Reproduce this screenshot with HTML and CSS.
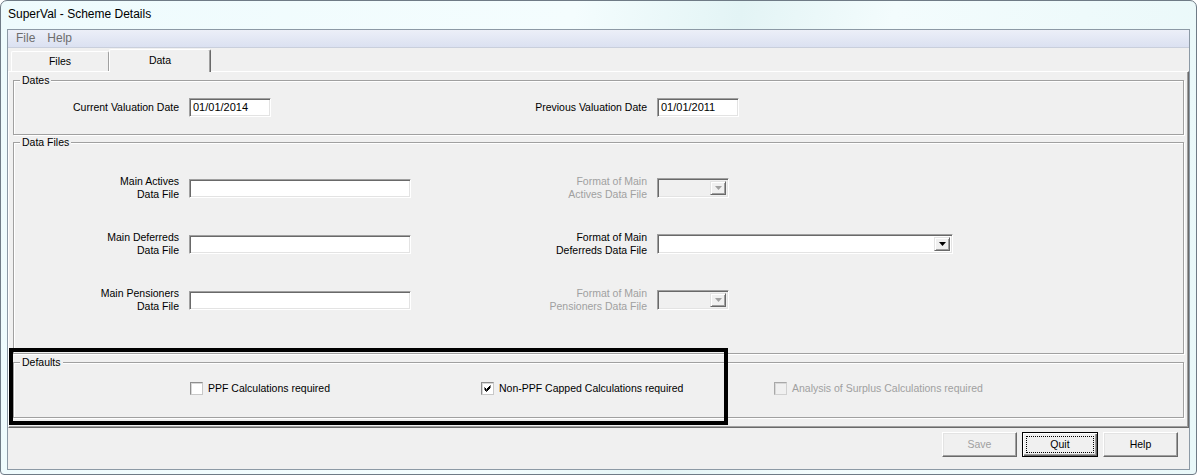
FILE: index.html
```html
<!DOCTYPE html>
<html>
<head>
<meta charset="utf-8">
<title>SuperVal - Scheme Details</title>
<link rel="stylesheet" href="styles.css">
</head>
<body>
<div class="window">
  <div class="titlebar">SuperVal - Scheme Details</div>
  <div class="client">
    <div class="menubar"><span class="menu">File</span><span class="menu">Help</span></div>
    <div class="tabstrip">
      <div class="tab">Files</div>
      <div class="tab active">Data</div>
    </div>
    <div class="panel">
      <div class="group g-dates">
        <div class="gtitle">Dates</div>
        <div class="row date-row">
          <div class="lbl lbl-left">Current Valuation Date</div>
          <div class="text w-date">01/01/2014</div>
          <div class="lbl lbl-right-date">Previous Valuation Date</div>
          <div class="text w-date">01/01/2011</div>
        </div>
      </div>
      <div class="group g-files">
        <div class="gtitle">Data Files</div>
        <div class="file-rows">
          <div class="row file-row">
            <div class="lbl lbl-left">Main Actives<br>Data File</div>
            <div class="text w-file"></div>
            <div class="lbl lbl-right disabled">Format of Main<br>Actives Data File</div>
            <div class="combo combo-small is-disabled"><span class="drop"><svg width="7" height="4" viewBox="0 0 7 4"><polygon points="0,0 7,0 3.5,4" fill="#a0a0a0"/></svg></span></div>
          </div>
          <div class="row file-row">
            <div class="lbl lbl-left">Main Deferreds<br>Data File</div>
            <div class="text w-file"></div>
            <div class="lbl lbl-right">Format of Main<br>Deferreds Data File</div>
            <div class="combo combo-wide"><span class="drop"><svg width="7" height="4" viewBox="0 0 7 4"><polygon points="0,0 7,0 3.5,4" fill="#000"/></svg></span></div>
          </div>
          <div class="row file-row">
            <div class="lbl lbl-left">Main Pensioners<br>Data File</div>
            <div class="text w-file"></div>
            <div class="lbl lbl-right disabled">Format of Main<br>Pensioners Data File</div>
            <div class="combo combo-small is-disabled"><span class="drop"><svg width="7" height="4" viewBox="0 0 7 4"><polygon points="0,0 7,0 3.5,4" fill="#a0a0a0"/></svg></span></div>
          </div>
        </div>
      </div>
      <div class="group g-defaults">
        <div class="gtitle">Defaults</div>
        <div class="row chk-row">
          <div class="chk chk-1"><span class="box"></span><span class="chk-label">PPF Calculations required</span></div>
          <div class="chk chk-2"><span class="box"><svg width="7" height="7" viewBox="0 0 7 7"><path d="M0.5 2.5 L2.5 4.5 L6.5 0.5 M0.5 3.5 L2.5 5.5 L6.5 1.5 M0.5 4.5 L2.5 6.5 L6.5 2.5" stroke="#000" stroke-width="1" fill="none"/></svg></span><span class="chk-label">Non-PPF Capped Calculations required</span></div>
          <div class="chk chk-3 disabled"><span class="box"></span><span class="chk-label">Analysis of Surplus Calculations required</span></div>
        </div>
      </div>
    </div>
    <div class="buttons">
      <div class="btn btn-save disabled">Save</div>
      <div class="btn btn-quit"><span class="btn-focus">Quit</span></div>
      <div class="btn btn-help">Help</div>
    </div>
  </div>
  <div class="annotation"></div>
</div>
</body>
</html>
```

FILE: styles.css
```css
* { box-sizing: border-box; }

body {
  margin: 0;
  width: 1197px;
  height: 475px;
  overflow: hidden;
  background: #ffffff;
  font-family: "Liberation Sans", Arial, sans-serif;
  color: #000;
}

.window {
  position: relative;
  width: 1197px;
  height: 475px;
  border: 1px solid #6f7b86;
  border-radius: 7px 7px 4px 4px;
  background: linear-gradient(100deg, #eefbfd 0%, #f4fdfe 45%, #e3f4f5 58%, #f3fcfd 70%, #e9f8f9 100%);
}

.titlebar {
  height: 28px;
  padding-left: 7px;
  font-size: 12px;
  line-height: 26px;
}

.client {
  margin: 0 6px;
  height: 441px;
  border: 1px solid #8c99a5;
  background: #f0f0f0;
  display: flex;
  flex-direction: column;
}

.menubar {
  height: 18px;
  border-bottom: 1px solid #c9cfdc;
  background: linear-gradient(#eceff8, #dbe1f1);
  padding-left: 2px;
  font-size: 12px;
  line-height: 17px;
  color: #6d6d6d;
  display: flex;
}

.menu { padding: 0 6px; }

.tabstrip {
  height: 23px;
  display: flex;
  align-items: flex-end;
  padding-left: 3px;
}

.tab {
  width: 98px;
  height: 20px;
  background: #f0f0f0;
  border-top: 1px solid #fff;
  border-left: 1px solid #fff;
  border-right: 1px solid #a0a0a0;
  border-radius: 2px 2px 0 0;
  font-size: 10.5px;
  line-height: 19px;
  text-align: center;
}

.tab.active {
  width: 102px;
  height: 23px;
  margin-bottom: -1px;
  position: relative;
  z-index: 1;
  border-right: 1px solid #696969;
  box-shadow: inset -1px 0 0 #a0a0a0;
  line-height: 20px;
}

.panel {
  height: 357px;
  border-top: 1px solid #fff;
  border-left: 1px solid #fff;
  border-right: 1px solid #696969;
  border-bottom: 1px solid #696969;
  box-shadow: inset -1px -1px 0 #a0a0a0;
  padding: 8px 4px 0 4px;
}

.group {
  border: 1px solid #a0a0a0;
  box-shadow: inset 1px 1px 0 #fff, 1px 1px 0 #fff;
}

.g-dates { height: 55px; }
.g-files { height: 212px; margin-top: 7px; }
.g-defaults { height: 56px; margin-top: 8px; }

.gtitle {
  width: max-content;
  margin: -7px 0 0 6px;
  padding: 0 2px;
  background: #f0f0f0;
  font-size: 10.5px;
  line-height: 13px;
}

.row {
  display: flex;
  align-items: center;
}

.date-row { margin-top: 11px; height: 19px; }

.lbl {
  font-size: 10.5px;
  line-height: 13px;
  text-align: right;
  flex: none;
}

.lbl-left { width: 165px; margin-right: 10px; }
.lbl-right-date { width: 376px; margin-right: 10px; }
.lbl-right { width: 236px; margin-right: 10px; }

.disabled { color: #a0a0a0; }

.text {
  height: 19px;
  flex: none;
  background: #fff;
  border: 1px solid;
  border-color: #a0a0a0 #fff #fff #a0a0a0;
  box-shadow: inset 1px 1px 0 #696969, inset -1px -1px 0 #e3e3e3;
  font-size: 11px;
  line-height: 17px;
  padding-left: 3px;
}

.w-date { width: 82px; }
.w-file { width: 222px; }

.file-rows {
  margin-top: 29px;
  display: flex;
  flex-direction: column;
  gap: 36px;
}

.file-row { height: 20px; }

.combo {
  height: 20px;
  flex: none;
  background: #fff;
  border: 1px solid;
  border-color: #a0a0a0 #fff #fff #a0a0a0;
  box-shadow: inset 1px 1px 0 #696969, inset -1px -1px 0 #e3e3e3;
  display: flex;
  justify-content: flex-end;
  padding: 2px;
}

.combo.is-disabled { background: #f0f0f0; }
.combo-small { width: 72px; }
.combo-wide { width: 296px; }

.drop {
  width: 16px;
  height: 100%;
  background: #f0f0f0;
  border: 1px solid;
  border-color: #e3e3e3 #696969 #696969 #e3e3e3;
  box-shadow: inset 1px 1px 0 #fff, inset -1px -1px 0 #a0a0a0;
  display: flex;
  align-items: center;
  justify-content: center;
}

.drop svg { display: block; }

.chk-row { margin-top: 13px; height: 13px; }

.chk {
  display: flex;
  align-items: center;
  flex: none;
  font-size: 10.5px;
  line-height: 13px;
}

.chk-1 { margin-left: 176px; width: 291px; }
.chk-2 { width: 293px; }

.box {
  width: 13px;
  height: 13px;
  flex: none;
  background: #fff;
  border: 1px solid;
  border-color: #8e8e8e #c8c8c8 #c8c8c8 #8e8e8e;
  box-shadow: inset 1px 1px 0 #d8d8d8;
  display: flex;
  align-items: center;
  justify-content: center;
  margin-right: 5px;
}

.box svg { display: block; }

.chk-3 .box {
  background: #f0f0f0;
  border-color: #a8a8a8 #d0d0d0 #d0d0d0 #a8a8a8;
}

.buttons {
  margin-top: 4px;
  height: 25px;
  display: flex;
  justify-content: flex-end;
  gap: 5px;
  padding-right: 11px;
}

.btn {
  width: 75px;
  height: 25px;
  background: #f0f0f0;
  border: 1px solid;
  border-color: #fff #696969 #696969 #fff;
  box-shadow: inset -1px -1px 0 #a0a0a0, inset 1px 1px 0 #e3e3e3;
  font-size: 10.5px;
  line-height: 23px;
  text-align: center;
}

.btn-save { color: #a0a0a0; }

.btn-quit {
  width: 76px;
  border: 1px solid #000;
  box-shadow: inset 1px 1px 0 #fff, inset -1px -1px 0 #696969, inset -2px -2px 0 #a0a0a0;
  padding: 3px;
  line-height: 15px;
}

.btn-focus {
  display: block;
  height: 17px;
  border: 1px dotted #000;
}

.annotation {
  position: absolute;
  left: 8px;
  top: 347px;
  width: 719px;
  height: 77px;
  border: 4px solid #000;
}
```
